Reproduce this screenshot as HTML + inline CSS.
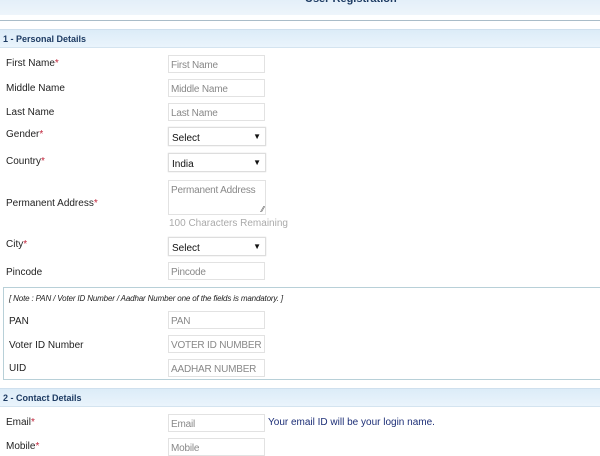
<!DOCTYPE html>
<html><head><style>
*{margin:0;padding:0;box-sizing:border-box}
body{width:600px;height:450px;overflow:hidden;background:#fff;font-family:"Liberation Sans",sans-serif;position:relative;color:#222}
.a{position:absolute;white-space:nowrap}
.lbl{font-size:10px;color:#222}
.lbl b{color:#c0243a;font-weight:normal}
.inp{position:absolute;left:168px;width:97px;height:18px;border:1px solid #e2e2e2;font-size:10px;color:#888;padding:4px 0 0 2px;white-space:nowrap;overflow:hidden;letter-spacing:-0.2px}
.sel{position:absolute;left:168px;width:98px;height:19px;border:1px solid #ddd;box-shadow:0 0 1px #ccc;font-size:10px;color:#111;padding:5px 0 0 3px}
.sel:after{content:"\25BC";position:absolute;right:4px;top:4px;font-size:8px}
.hdr{position:absolute;left:0;width:600px;height:19px;background:linear-gradient(#dcecf8,#eaf4fc);border-top:1px solid #cfe0ee;border-bottom:1px solid #d4e4f0;font-size:9px;font-weight:bold;color:#1d3b63;padding:4px 0 0 3px}
</style></head><body>
<div class="a" style="left:0;top:0;width:600px;height:15px;background:linear-gradient(#e4eff9,#eef5fb)"></div>
<div class="a" style="left:305px;top:-7px;font-size:11px;font-weight:bold;color:#1d3b63">User Registration</div>
<div class="a" style="left:0;top:20px;width:600px;height:1px;background:#a9bcc8"></div>
<div class="hdr" style="top:29px">1 - Personal Details</div>

<div class="a lbl" style="left:6px;top:58px">First Name<b>*</b></div>
<div class="inp" style="top:55px">First Name</div>
<div class="a lbl" style="left:6px;top:83px">Middle Name</div>
<div class="inp" style="top:79px">Middle Name</div>
<div class="a lbl" style="left:6px;top:107px">Last Name</div>
<div class="inp" style="top:103px">Last Name</div>
<div class="a lbl" style="left:6px;top:129px">Gender<b>*</b></div>
<div class="sel" style="top:127px">Select</div>
<div class="a lbl" style="left:6px;top:156px">Country<b>*</b></div>
<div class="sel" style="top:153px">India</div>
<div class="a lbl" style="left:6px;top:198px">Permanent Address<b>*</b></div>
<div class="inp" style="top:180px;height:35px;width:98px;padding-top:4px">Permanent Address<span style="position:absolute;right:1px;bottom:0;font-size:8px;color:#555">⁄⁄</span></div>
<div class="a" style="left:169px;top:218px;font-size:10px;color:#aaa">100 Characters Remaining</div>
<div class="a lbl" style="left:6px;top:239px">City<b>*</b></div>
<div class="sel" style="top:237px">Select</div>
<div class="a lbl" style="left:6px;top:267px">Pincode</div>
<div class="inp" style="top:262px">Pincode</div>

<div class="a" style="left:3px;top:287px;width:610px;height:93px;border:1px solid #b8d0d8"></div>
<div class="a" style="left:9px;top:294px;font-size:8px;font-style:italic;color:#222;letter-spacing:-0.15px">[ Note : PAN / Voter ID Number / Aadhar Number one of the fields is mandatory. ]</div>
<div class="a lbl" style="left:9px;top:316px">PAN</div>
<div class="inp" style="top:311px">PAN</div>
<div class="a lbl" style="left:9px;top:340px">Voter ID Number</div>
<div class="inp" style="top:335px">VOTER ID NUMBER</div>
<div class="a lbl" style="left:9px;top:363px">UID</div>
<div class="inp" style="top:359px">AADHAR NUMBER</div>

<div class="hdr" style="top:388px">2 - Contact Details</div>
<div class="a lbl" style="left:6px;top:417px">Email<b>*</b></div>
<div class="inp" style="top:414px">Email</div>
<div class="a" style="left:268px;top:417px;font-size:10px;color:#1d2f77">Your email ID will be your login name.</div>
<div class="a lbl" style="left:6px;top:441px">Mobile<b>*</b></div>
<div class="inp" style="top:438px">Mobile</div>
</body></html>
